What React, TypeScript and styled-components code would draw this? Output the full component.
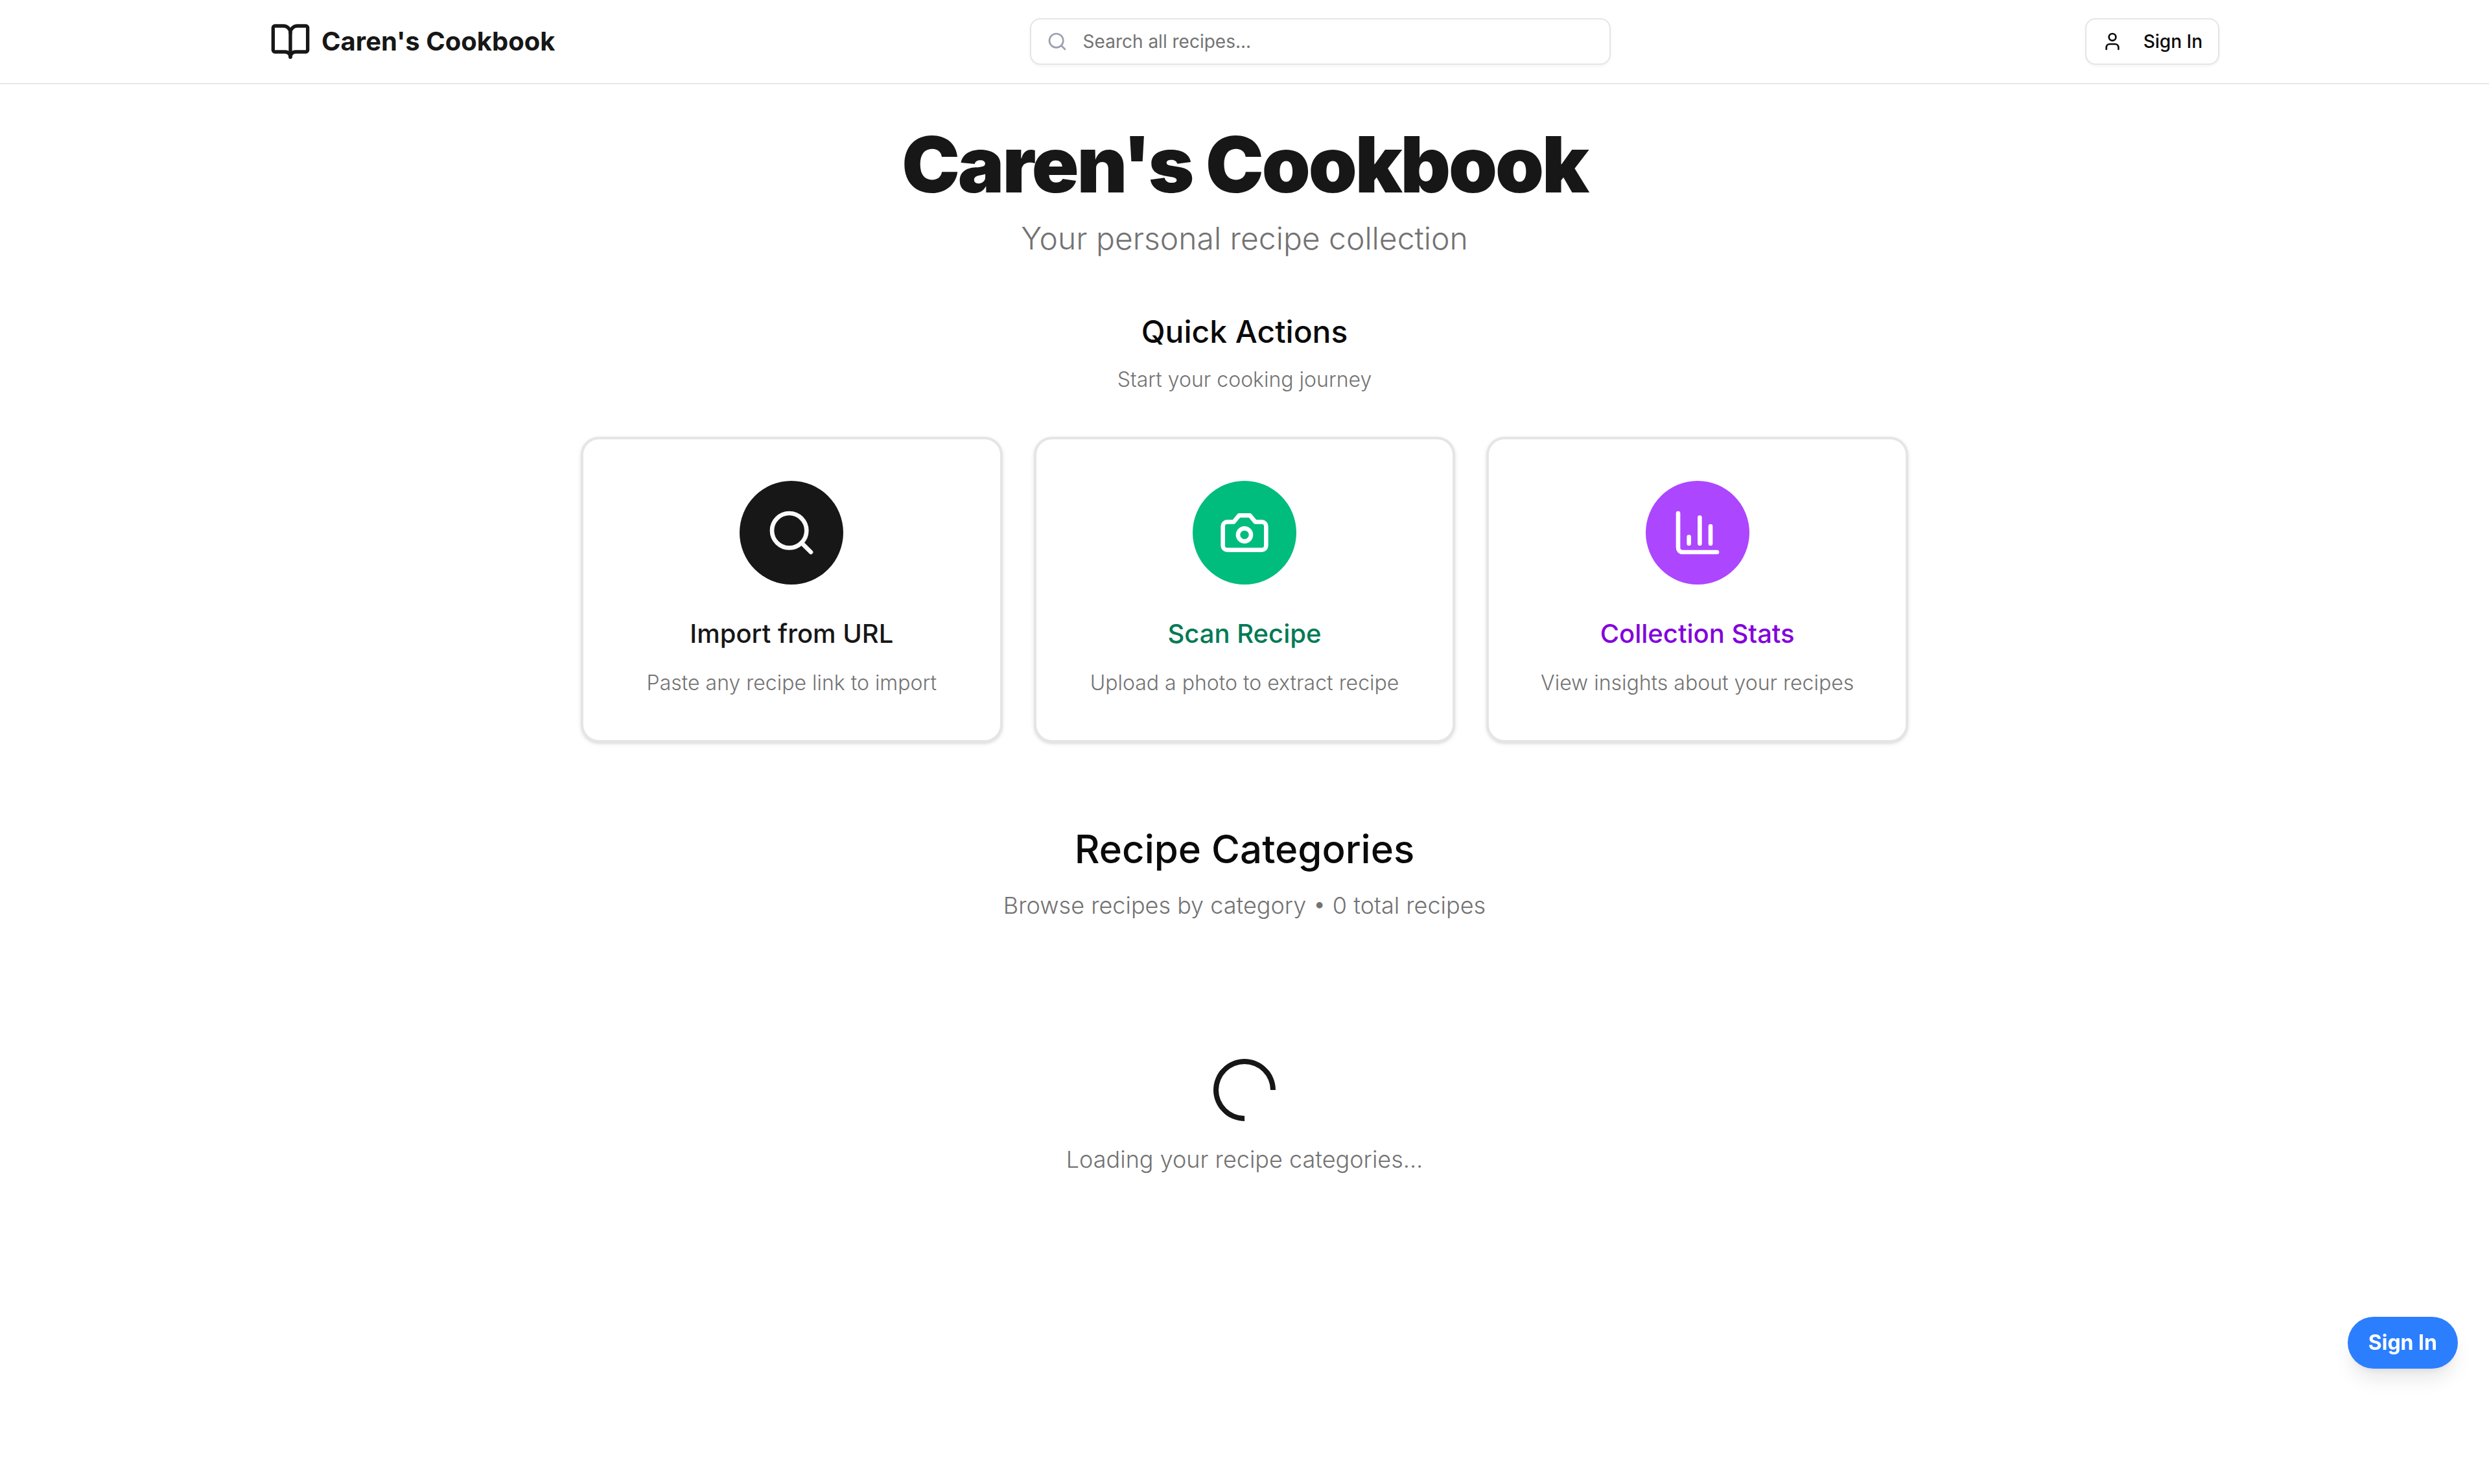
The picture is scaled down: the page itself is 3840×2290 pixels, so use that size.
import React from "react";
import styled, { createGlobalStyle } from "styled-components";
import { BookOpen, ChartColumn, Search, User } from "lucide-react";

const GlobalStyle = createGlobalStyle`
  *, *::before, *::after { box-sizing: border-box; }
  body {
    margin: 0;
    background: #fff;
    color: #0a0a0a;
    font-family: Inter, "Liberation Sans", sans-serif;
    font-size: 32px;
    line-height: 48px;
    -webkit-font-smoothing: antialiased;
  }
  h1, h2, h3, p { margin: 0; }
  button, input { font: inherit; color: inherit; }
  button { cursor: pointer; }
`;

const Header = styled.header`
  background: #fff;
  border-bottom: 2px solid #e5e7eb;
`;

const HeaderInner = styled.div`
  max-width: 3072px;
  height: 128px;
  margin: 0 auto;
  padding: 0 32px;
  display: flex;
  align-items: center;
  justify-content: space-between;
`;

const Brand = styled.a`
  display: flex;
  align-items: center;
  gap: 16px;
  color: #171717;
  font-size: 40px;
  font-weight: 700;
  line-height: 56px;
  text-decoration: none;
`;

const SearchField = styled.label`
  flex: 0 1 896px;
  height: 72px;
  padding: 0 24px;
  display: flex;
  align-items: center;
  gap: 24px;
  border: 2px solid #e5e5e5;
  border-radius: 16px;
  box-shadow: 0 2px 4px rgba(0, 0, 0, 0.05);
  color: #99a1af;
`;

const SearchInput = styled.input`
  flex: 1;
  min-width: 0;
  padding: 0;
  border: 0;
  outline: 0;
  background: transparent;
  color: #0a0a0a;
  font-size: 28px;
  line-height: 40px;
  &::placeholder { color: #737373; opacity: 1; }
`;

const OutlineButton = styled.button`
  height: 72px;
  padding: 0 24px;
  display: flex;
  align-items: center;
  gap: 32px;
  background: #fff;
  border: 2px solid #e5e5e5;
  border-radius: 16px;
  box-shadow: 0 2px 4px rgba(0, 0, 0, 0.05);
  font-size: 28px;
  font-weight: 500;
  line-height: 40px;
`;

const Main = styled.main`
  max-width: 3072px;
  margin: 0 auto;
  padding: 64px 32px;
  text-align: center;
`;

const PageTitle = styled.h1`
  color: #171717;
  font-size: 120px;
  font-weight: 900;
  line-height: 120px;
  letter-spacing: -0.025em;
`;

const Tagline = styled.p`
  margin-top: 22px;
  color: #737373;
  font-size: 48px;
  font-weight: 300;
  line-height: 64px;
`;

const Actions = styled.section`
  max-width: 2048px;
  margin: 80px auto 0;
`;

const ActionsTitle = styled.h2`
  font-size: 48px;
  font-weight: 500;
  line-height: 64px;
`;

const Note = styled.p`
  margin-top: 18px;
  color: #737373;
  font-weight: 300;
`;

const CardGrid = styled.div`
  margin-top: 64px;
  display: grid;
  grid-template-columns: repeat(3, 1fr);
  gap: 48px;
`;

const Card = styled.button`
  padding: 64px 32px;
  display: flex;
  flex-direction: column;
  align-items: center;
  background: #fff;
  border: 4px solid #e5e5e5;
  border-radius: 28px;
  box-shadow: 0 2px 6px rgba(0, 0, 0, 0.1), 0 2px 4px -2px rgba(0, 0, 0, 0.1);
`;

const IconDisc = styled.span<{ $fill: string; $ink: string }>`
  width: 160px;
  height: 160px;
  display: flex;
  align-items: center;
  justify-content: center;
  border-radius: 50%;
  background: ${(p) => p.$fill};
  color: ${(p) => p.$ink};
`;

const CardTitle = styled.span<{ $color: string }>`
  margin-top: 48px;
  color: ${(p) => p.$color};
  font-size: 40px;
  font-weight: 500;
  line-height: 56px;
`;

const CardText = styled.span`
  margin-top: 24px;
  color: #737373;
  font-weight: 300;
`;

const Categories = styled.section`
  margin-top: 128px;
`;

const CategoriesTitle = styled.h2`
  font-size: 60px;
  font-weight: 500;
  line-height: 72px;
`;

const Lead = styled.p`
  color: #737373;
  font-size: 36px;
  font-weight: 300;
  line-height: 54px;
`;

const Summary = styled(Lead)`
  margin-top: 24px;
`;

const Loading = styled.div`
  margin-top: 210px;
  display: flex;
  flex-direction: column;
  align-items: center;
  gap: 32px;
`;

const Spinner = styled.div`
  width: 96px;
  height: 96px;
  border: 8px solid #171717;
  border-right-color: transparent;
  border-radius: 50%;
  transform: rotate(45deg);
`;

const FloatingButton = styled.button`
  position: fixed;
  right: 48px;
  bottom: 178px;
  height: 80px;
  padding: 0 32px;
  border: 0;
  border-radius: 40px;
  background: #2b7fff;
  box-shadow: 0 20px 30px -6px rgba(0, 0, 0, 0.1), 0 8px 12px -8px rgba(0, 0, 0, 0.1);
  color: #fff;
  font-weight: 700;
`;

function CameraIcon({ size }: { size: number }) {
  return (
    <svg
      width={size}
      height={size}
      viewBox="0 0 24 24"
      fill="none"
      stroke="currentColor"
      strokeWidth="2"
      strokeLinecap="round"
      strokeLinejoin="round"
      aria-hidden="true"
    >
      <path d="M14.5 4h-5L7 7H4a2 2 0 0 0-2 2v9a2 2 0 0 0 2 2h16a2 2 0 0 0 2-2V9a2 2 0 0 0-2-2h-3l-2.5-3z" />
      <circle cx="12" cy="13" r="3" />
    </svg>
  );
}

const actions = [
  {
    title: "Import from URL",
    text: "Paste any recipe link to import",
    icon: <Search size={80} />,
    fill: "#171717",
    ink: "#fafafa",
    color: "#171717",
  },
  {
    title: "Scan Recipe",
    text: "Upload a photo to extract recipe",
    icon: <CameraIcon size={80} />,
    fill: "#00bc7d",
    ink: "#fff",
    color: "#007a55",
  },
  {
    title: "Collection Stats",
    text: "View insights about your recipes",
    icon: <ChartColumn size={80} />,
    fill: "#ad46ff",
    ink: "#fff",
    color: "#8200db",
  },
];

export default function App() {
  return (
    <>
      <GlobalStyle />
      <Header>
        <HeaderInner>
          <Brand href="#">
            <BookOpen size={64} />
            Caren's Cookbook
          </Brand>
          <SearchField>
            <Search size={32} />
            <SearchInput type="search" placeholder="Search all recipes..." aria-label="Search all recipes" />
          </SearchField>
          <OutlineButton type="button">
            <User size={32} />
            Sign In
          </OutlineButton>
        </HeaderInner>
      </Header>
      <Main>
        <PageTitle>Caren's Cookbook</PageTitle>
        <Tagline>Your personal recipe collection</Tagline>
        <Actions>
          <ActionsTitle>Quick Actions</ActionsTitle>
          <Note>Start your cooking journey</Note>
          <CardGrid>
            {actions.map((a) => (
              <Card key={a.title} type="button">
                <IconDisc $fill={a.fill} $ink={a.ink}>
                  {a.icon}
                </IconDisc>
                <CardTitle $color={a.color}>{a.title}</CardTitle>
                <CardText>{a.text}</CardText>
              </Card>
            ))}
          </CardGrid>
        </Actions>
        <Categories>
          <CategoriesTitle>Recipe Categories</CategoriesTitle>
          <Summary>Browse recipes by category • 0 total recipes</Summary>
          <Loading role="status">
            <Spinner />
            <Lead>Loading your recipe categories...</Lead>
          </Loading>
        </Categories>
      </Main>
      <FloatingButton type="button">Sign In</FloatingButton>
    </>
  );
}
